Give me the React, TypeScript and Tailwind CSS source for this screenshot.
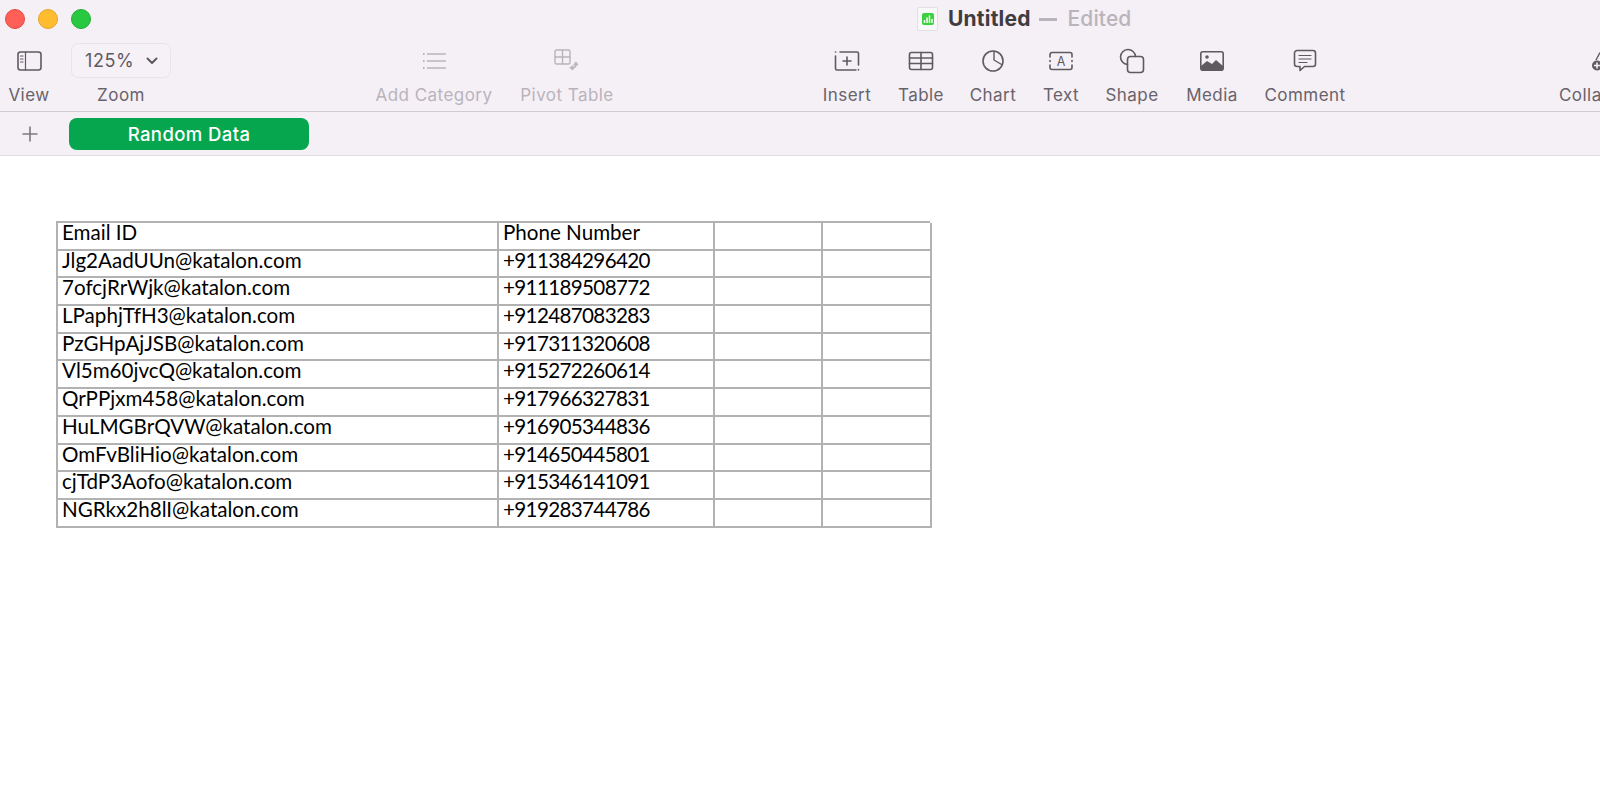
import React from "react";

const ink = "#5f5a60";
const dim = "#b9b4bb";

const rows = [
  ["Email ID", "Phone Number"],
  ["Jlg2AadUUn@katalon.com", "+911384296420"],
  ["7ofcjRrWjk@katalon.com", "+911189508772"],
  ["LPaphjTfH3@katalon.com", "+912487083283"],
  ["PzGHpAjJSB@katalon.com", "+917311320608"],
  ["Vl5m60jvcQ@katalon.com", "+915272260614"],
  ["QrPPjxm458@katalon.com", "+917966327831"],
  ["HuLMGBrQVW@katalon.com", "+916905344836"],
  ["OmFvBliHio@katalon.com", "+914650445801"],
  ["cjTdP3Aofo@katalon.com", "+915346141091"],
  ["NGRkx2h8lI@katalon.com", "+919283744786"],
];

function Ico({ w, h, children }: { w: number; h: number; children: React.ReactNode }) {
  return (
    <svg width={w} height={h} viewBox={`0 0 ${w} ${h}`} fill="none" stroke={ink} strokeWidth={1.6} strokeLinecap="round" strokeLinejoin="round">
      {children}
    </svg>
  );
}

function Tool({ label, className, dimmed, children }: { label: string; className: string; dimmed?: boolean; children: React.ReactNode }) {
  return (
    <div className={`flex flex-col items-center shrink-0 ${className}`}>
      <div className="h-[35px] flex items-center justify-center">{children}</div>
      <div className={`mt-[6px] text-[17px] leading-[22px] whitespace-nowrap tracking-[0.45px] ${dimmed ? "text-[#b9b4bb]" : "text-[#68636a]"}`}>{label}</div>
    </div>
  );
}

export default function App() {
  return (
    <div className="h-[786px] w-[1600px] overflow-hidden bg-white font-['Inter','Liberation_Sans',sans-serif]">
      <div className="bg-[#f5eff6]">
        <div className="h-[38px] flex items-center">
          <div className="flex items-center gap-[13px] ml-[5px] shrink-0">
            <span className="w-5 h-5 rounded-full bg-[#ff5f57] border border-[#e5483f]" />
            <span className="w-5 h-5 rounded-full bg-[#febc2e] border border-[#e5a526]" />
            <span className="w-5 h-5 rounded-full bg-[#28c840] border border-[#22ad35]" />
          </div>
          <div className="ml-[826px] w-[21px] h-[24px] shrink-0 bg-[#f8f8f8] border border-[#e3e0e4] rounded-[2px] flex items-center justify-center">
            <svg width="12" height="12" viewBox="0 0 12 12">
              <rect width="12" height="12" rx="2" fill="#38d13a" />
              <path d="M2.5 10V7M5 10V4.5M7.5 10V2.5M10 10V6" stroke="#fff" strokeWidth="1.5" />
            </svg>
          </div>
          <span className="ml-[10px] text-[21px] leading-[24px] font-bold text-[#3f3c40] tracking-[0.2px]">Untitled</span>
          <span className="ml-[8px] w-[18px] h-[3px] bg-[#b9b4bb] shrink-0" />
          <span className="ml-[11px] text-[21px] leading-[24px] font-medium text-[#b9b4bb] tracking-[0.1px]">Edited</span>
        </div>
        <div className="h-[74px] flex items-start pt-[5px] border-b border-[#d0cbd2]">
          <Tool label="View" className="w-[58px]">
            <Ico w={26} h={22}>
              <rect x="2" y="2" width="23" height="18" rx="2.5" />
              <path d="M9.5 2v18M4.5 6h2.5M4.5 9h2.5M4.5 12h2.5" strokeWidth="1.2" />
            </Ico>
          </Tool>
          <Tool label="Zoom" className="w-[100px] ml-[13px]">
            <div className="w-[100px] h-[35px] rounded-[7px] border border-[#e9e3ea] bg-[#f6f1f7] flex items-center pl-[13px] gap-[12px] text-[18px] text-[#5f5a60] tracking-[0.6px]">
              <span>125%</span>
              <svg width="12" height="8" viewBox="0 0 12 8" fill="none" stroke={ink} strokeWidth="2" strokeLinecap="round" strokeLinejoin="round"><path d="M1.5 1.5 6 6l4.5-4.5" /></svg>
            </div>
          </Tool>
          <Tool label="Add Category" dimmed className="w-[130px] ml-[198px]">
            <svg width="24" height="20" viewBox="0 0 24 20" fill="none" stroke={dim} strokeWidth="1.5">
              <path d="M5 3h19M5 10h19M5 17h19" />
              <path d="M1 3h1.5M1 10h1.5M1 17h1.5" strokeWidth="2" />
            </svg>
          </Tool>
          <Tool label="Pivot Table" dimmed className="w-[110px] ml-[13px]">
            <svg width="26" height="24" viewBox="0 0 26 24" fill="none" stroke={dim} strokeWidth="1.4" strokeLinejoin="round" strokeLinecap="round">
              <rect x="1" y="1" width="15" height="14" rx="1.5" />
              <path d="M8.5 1v14M1 8h15" />
              <path d="M22 15c0 2.500-1.500 4-4 4" strokeWidth="1.6" />
              <path d="M20 16h4l-2-3zM19 17v4l-3-2z" fill={dim} strokeWidth="0.8" />
            </svg>
          </Tool>
          <Tool label="Insert" className="w-[60px] ml-[195px]">
            <Ico w={28} h={22}>
              <path d="M2.500 6v12.500a1.500 1.500 0 0 0 1.500 1.500h19M2.500 2h.2M7 2h17a1.500 1.500 0 0 1 1.500 1.500V15M25.500 19.500v.5" />
              <path d="M14 7v8M10 11h8" />
            </Ico>
          </Tool>
          <Tool label="Table" className="w-[60px] ml-[14px]">
            <Ico w={26} h={20}>
              <rect x="1.500" y="1.500" width="23" height="17" rx="2" />
              <path d="M1.500 7h23M1.500 12.500h23M13 1.500v17" />
            </Ico>
          </Tool>
          <Tool label="Chart" className="w-[60px] ml-[12px]">
            <Ico w={24} h={24}>
              <circle cx="12" cy="12" r="10" />
              <path d="M13 2.500v8.500l7.500 4.500" strokeWidth="1.400" />
            </Ico>
          </Tool>
          <Tool label="Text" className="w-[50px] ml-[13px]">
            <Ico w={26} h={20}>
              <path d="M2 6V3.500A2 2 0 0 1 4 1.500h18a2 2 0 0 1 2 2V6M2 9.500v1M24 9.500v1M2 14v2.500a2 2 0 0 0 2 2h18a2 2 0 0 0 2-2V14" />
              <text x="13" y="14.500" textAnchor="middle" fontSize="12.500" fill={ink} stroke="none" fontFamily="Inter, sans-serif">A</text>
            </Ico>
          </Tool>
          <Tool label="Shape" className="w-[64px] ml-[14px]">
            <Ico w={26} h={26}>
              <path d="M8.500 16.500a7.500 7.500 0 1 1 8-8" />
              <rect x="8.500" y="8.500" width="16" height="16" rx="3" />
            </Ico>
          </Tool>
          <Tool label="Media" className="w-[64px] ml-[16px]">
            <svg width="24" height="20" viewBox="0 0 24 20">
              <rect x="0.800" y="0.800" width="22.400" height="18.400" rx="2" fill="#f5eff6" stroke={ink} strokeWidth="1.600" />
              <path d="M1 15l6-5 5 3 4-4 7 6v3a1 1 0 0 1-1 1H2a1 1 0 0 1-1-1z" fill={ink} />
              <circle cx="7" cy="6" r="1.800" fill={ink} />
            </svg>
          </Tool>
          <Tool label="Comment" className="w-[90px] ml-[16px]">
            <Ico w={24} h={24}>
              <path d="M4 1.500h16a2.500 2.500 0 0 1 2.500 2.500v11a2.500 2.500 0 0 1-2.500 2.500h-8.500L7 21.500v-4H4A2.500 2.500 0 0 1 1.500 15V4A2.500 2.500 0 0 1 4 1.500z" />
              <path d="M6 6.500h12M6 10h12M6 13.500h8" strokeWidth="1.200" />
            </Ico>
          </Tool>
          <div className="ml-[209px] shrink-0 w-[80px] flex flex-col items-start">
            <div className="h-[35px] pl-[33px] flex items-center">
              <svg width="24" height="22" viewBox="0 0 24 22" fill="none" stroke={ink} strokeWidth="1.400">
                <path d="M4 10 8 2.500" />
                <circle cx="5" cy="15.500" r="5" fill={ink} stroke="none" />
                <path d="M5 12.500v6M2 15.500h6" stroke="#f5eff6" strokeWidth="1.600" />
              </svg>
            </div>
            <div className="mt-[6px] text-[17px] leading-[22px] whitespace-nowrap tracking-[0.45px] text-[#68636a]">Collaborate</div>
          </div>
        </div>
        <div className="h-[44px] flex items-center border-b border-[#e1dce3]">
          <svg className="ml-[21px] shrink-0" width="18" height="18" viewBox="0 0 18 18" stroke="#7d787f" strokeWidth="1.600"><path d="M9 1.500v15M1.500 9h15" /></svg>
          <div className="ml-[30px] w-[240px] h-[32px] rounded-[8px] bg-[#05a64d] flex items-center justify-center pt-[2px] text-white text-[18.500px] font-medium tracking-[0.4px]">Random Data</div>
        </div>
      </div>
      <div className="pt-[65px] pl-[56px]">
        <div className="w-[874px] border-t-2 border-l-2 border-[#b2b2b2] font-['Lato','Carlito',sans-serif] text-[20.600px] text-black">
          {rows.map((r) => (
            <div key={r[0]} className="grid grid-cols-[441px_216px_108px_109px] h-[27.700px] leading-[18px]">
              <div className="border-r-2 border-b-2 border-[#b2b2b2] pl-[4px] whitespace-nowrap">{r[0]}</div>
              <div className={`border-r-2 border-b-2 border-[#b2b2b2] pl-[4px] whitespace-nowrap ${r[1].startsWith("+") ? "tracking-[-0.65px]" : ""}`}>{r[1]}</div>
              <div className="border-r-2 border-b-2 border-[#b2b2b2]" />
              <div className="border-r-2 border-b-2 border-[#b2b2b2]" />
            </div>
          ))}
        </div>
      </div>
    </div>
  );
}
